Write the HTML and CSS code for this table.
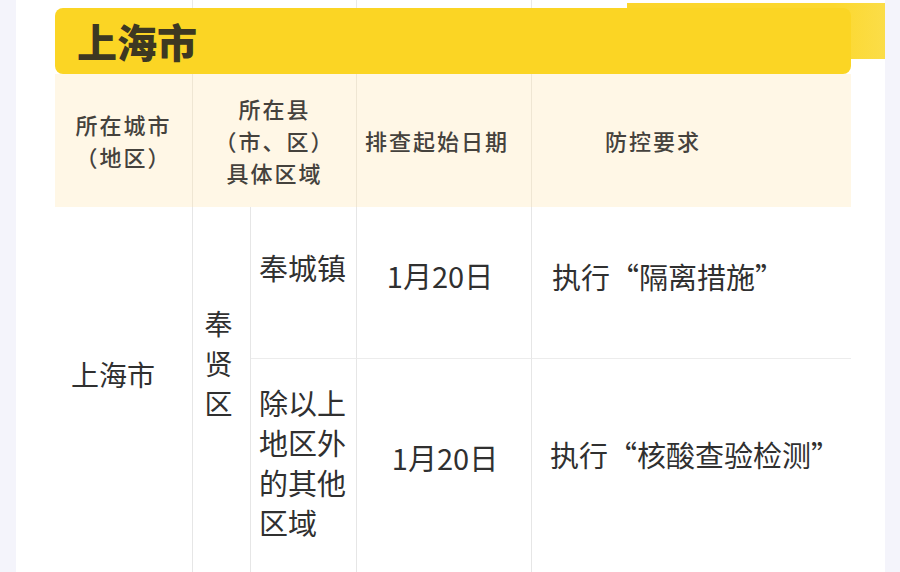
FILE: index.html
```html
<!DOCTYPE html>
<html lang="zh-CN">
<head>
<meta charset="utf-8">
<title>上海市</title>
<link rel="stylesheet" href="styles.css">
</head>
<body>
<div class="page">
  <div class="overlay"></div>
  <div class="sheet">
    <div class="top-strip">
      <div class="ts-cell"></div>
      <div class="ts-cell"></div>
      <div class="ts-cell"></div>
      <div class="ts-cell last"></div>
    </div>
    <div class="title">上海市</div>
    <div class="head">
      <div class="hcell">所在城市<br>（地区）</div>
      <div class="hcell">所在县<br>（市、区）<br>具体区域</div>
      <div class="hcell date-h">排查起始日期</div>
      <div class="hcell last req">防控要求</div>
    </div>
    <div class="body">
      <div class="cell city">上海市</div>
      <div class="cell district">奉<br>贤<br>区</div>
      <div class="cell town t1">奉城镇</div>
      <div class="cell date d1">1月20日</div>
      <div class="cell rule r1 last">执行“隔离措施”</div>
      <div class="cell town t2 bt">除以上<br>地区外<br>的其他<br>区域</div>
      <div class="cell date d2 bt">1月20日</div>
      <div class="cell rule r2 bt last">执行“核酸查验检测”</div>
    </div>
  </div>
</div>
</body>
</html>
```

FILE: styles.css
```css
html, body {
  margin: 0;
  padding: 0;
}
body {
  background: #f4f4fb;
  font-family: "Noto Sans CJK SC", "Noto Sans", sans-serif;
  color: #333;
}
.page {
  position: relative;
  margin: 0 15px 0 16px;
  height: 572px;
  background: #ffffff;
  overflow: hidden;
}
.overlay {
  position: absolute;
  left: 611px;
  top: 3px;
  width: 258px;
  height: 56px;
  background: linear-gradient(90deg, #fcd52a 0%, #fcd82e 80%, #fbdd48 100%);
}
.sheet {
  margin-left: 39px;
  width: 796px;
}
.top-strip {
  display: grid;
  grid-template-columns: 138px 164px 175px 319px;
  height: 8px;
}
.ts-cell {
  border-right: 1px solid #e9e9e9;
}
.ts-cell.last {
  border-right: none;
}
.title {
  position: relative;
  height: 66px;
  background: #fbd524;
  border-radius: 8px;
  padding-left: 22px;
  font-size: 40px;
  font-weight: 900;
  line-height: 66px;
  color: #3d3822;
}
.head {
  display: grid;
  grid-template-columns: 138px 164px 175px 319px;
  height: 133px;
  background: #fff7e6;
}
.hcell {
  display: flex;
  align-items: center;
  justify-content: center;
  text-align: center;
  font-size: 22px;
  font-weight: 500;
  letter-spacing: 2px;
  line-height: 32px;
  color: #45423d;
  border-right: 1px solid #efe6d3;
  padding-bottom: 2px;
}
.hcell.last {
  border-right: none;
}
.hcell.date-h {
  padding-right: 14px;
}
.hcell.req {
  justify-content: flex-start;
  padding-left: 73px;
}
.body {
  display: grid;
  grid-template-columns: 138px 58px 106px 175px 319px;
  grid-template-rows: 151px 220px;
}
.cell {
  border-right: 1px solid #e6e6e6;
  font-size: 29px;
  line-height: 40px;
  color: #303030;
}
.cell.last {
  border-right: none;
}
.bt {
  border-top: 1px solid #ececec;
}
.city {
  grid-row: 1 / span 2;
  padding: 147px 0 0 16px;
  font-size: 28px;
}
.district {
  grid-row: 1 / span 2;
  padding-top: 96px;
  text-align: center;
  font-size: 28px;
  padding-right: 6px;
}
.town {
  padding-left: 8px;
}
.t1 {
  padding-top: 40px;
}
.t2 {
  padding-top: 23px;
}
.date {
  text-align: center;
}
.d1 {
  padding-top: 48px;
  padding-right: 8px;
}
.d2 {
  padding-top: 78px;
  padding-left: 2px;
}
.rule {
  padding-left: 20px;
}
.r1 {
  padding-top: 49px;
}
.r2 {
  padding-top: 75px;
  padding-left: 18px;
}
```
